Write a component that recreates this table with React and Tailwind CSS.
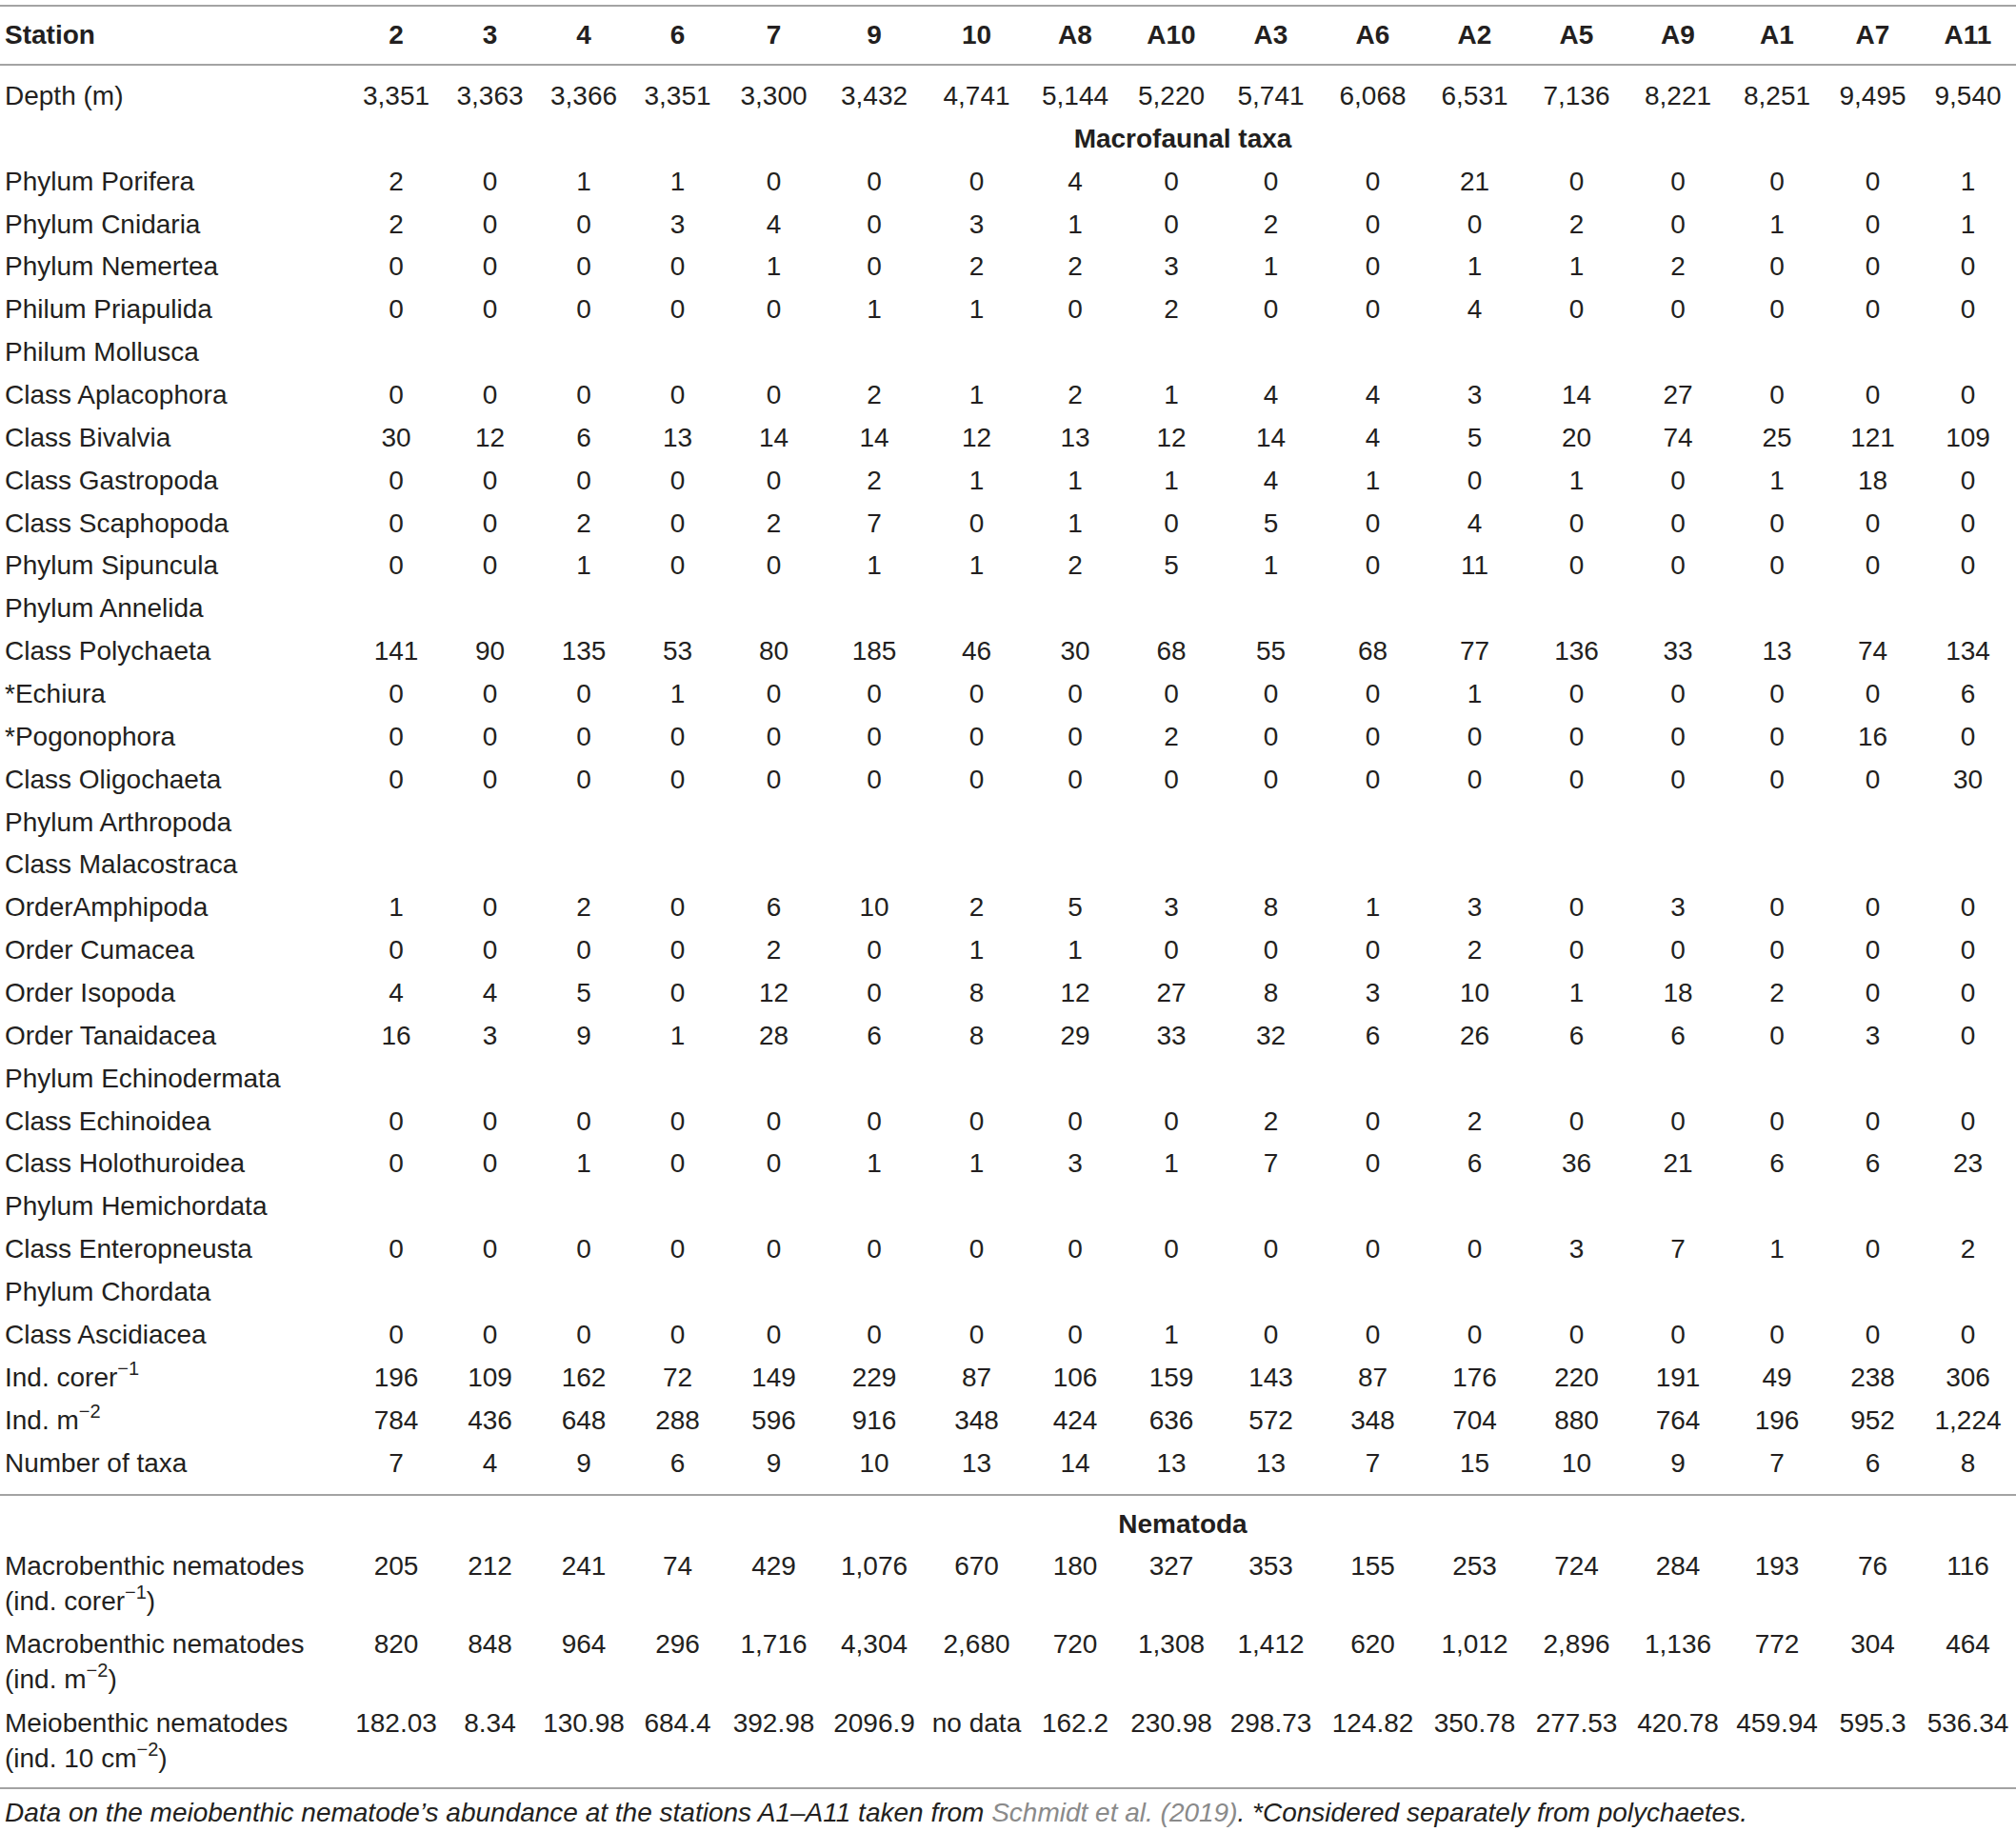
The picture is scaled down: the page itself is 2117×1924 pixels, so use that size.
import React from "react";

// Column widths measured from the reference (label column + 17 stations)
const colWidths = [
  "w-[367px]", "w-[98px]", "w-[99px]", "w-[98px]", "w-[99px]", "w-[103px]",
  "w-[108px]", "w-[107px]", "w-[100px]", "w-[102px]", "w-[107px]", "w-[107px]",
  "w-[107px]", "w-[107px]", "w-[106px]", "w-[102px]", "w-[99px]", "w-[101px]",
];

const stations = ["2", "3", "4", "6", "7", "9", "10", "A8", "A10", "A3", "A6", "A2", "A5", "A9", "A1", "A7", "A11"];

const depth = ["3,351", "3,363", "3,366", "3,351", "3,300", "3,432", "4,741", "5,144", "5,220", "5,741", "6,068", "6,531", "7,136", "8,221", "8,251", "9,495", "9,540"];

const row = (s) => s.split(" ");

const taxa = [
  { label: "Phylum Porifera", values: row("2 0 1 1 0 0 0 4 0 0 0 21 0 0 0 0 1") },
  { label: "Phylum Cnidaria", values: row("2 0 0 3 4 0 3 1 0 2 0 0 2 0 1 0 1") },
  { label: "Phylum Nemertea", values: row("0 0 0 0 1 0 2 2 3 1 0 1 1 2 0 0 0") },
  { label: "Philum Priapulida", values: row("0 0 0 0 0 1 1 0 2 0 0 4 0 0 0 0 0") },
  { label: "Philum Mollusca" },
  { label: "Class Aplacophora", values: row("0 0 0 0 0 2 1 2 1 4 4 3 14 27 0 0 0") },
  { label: "Class Bivalvia", values: row("30 12 6 13 14 14 12 13 12 14 4 5 20 74 25 121 109") },
  { label: "Class Gastropoda", values: row("0 0 0 0 0 2 1 1 1 4 1 0 1 0 1 18 0") },
  { label: "Class Scaphopoda", values: row("0 0 2 0 2 7 0 1 0 5 0 4 0 0 0 0 0") },
  { label: "Phylum Sipuncula", values: row("0 0 1 0 0 1 1 2 5 1 0 11 0 0 0 0 0") },
  { label: "Phylum Annelida" },
  { label: "Class Polychaeta", values: row("141 90 135 53 80 185 46 30 68 55 68 77 136 33 13 74 134") },
  { label: "*Echiura", values: row("0 0 0 1 0 0 0 0 0 0 0 1 0 0 0 0 6") },
  { label: "*Pogonophora", values: row("0 0 0 0 0 0 0 0 2 0 0 0 0 0 0 16 0") },
  { label: "Class Oligochaeta", values: row("0 0 0 0 0 0 0 0 0 0 0 0 0 0 0 0 30") },
  { label: "Phylum Arthropoda" },
  { label: "Class Malacostraca" },
  { label: "OrderAmphipoda", values: row("1 0 2 0 6 10 2 5 3 8 1 3 0 3 0 0 0") },
  { label: "Order Cumacea", values: row("0 0 0 0 2 0 1 1 0 0 0 2 0 0 0 0 0") },
  { label: "Order Isopoda", values: row("4 4 5 0 12 0 8 12 27 8 3 10 1 18 2 0 0") },
  { label: "Order Tanaidacea", values: row("16 3 9 1 28 6 8 29 33 32 6 26 6 6 0 3 0") },
  { label: "Phylum Echinodermata" },
  { label: "Class Echinoidea", values: row("0 0 0 0 0 0 0 0 0 2 0 2 0 0 0 0 0") },
  { label: "Class Holothuroidea", values: row("0 0 1 0 0 1 1 3 1 7 0 6 36 21 6 6 23") },
  { label: "Phylum Hemichordata" },
  { label: "Class Enteropneusta", values: row("0 0 0 0 0 0 0 0 0 0 0 0 3 7 1 0 2") },
  { label: "Phylum Chordata" },
  { label: "Class Ascidiacea", values: row("0 0 0 0 0 0 0 0 1 0 0 0 0 0 0 0 0") },
  { label: <>Ind. corer<sup className="text-[20px] -top-[12px]">−1</sup></>, values: row("196 109 162 72 149 229 87 106 159 143 87 176 220 191 49 238 306") },
  { label: <>Ind. m<sup className="text-[20px] -top-[12px]">−2</sup></>, values: row("784 436 648 288 596 916 348 424 636 572 348 704 880 764 196 952 1,224") },
];

const taxaCount = row("7 4 9 6 9 10 13 14 13 13 7 15 10 9 7 6 8");

const nematodes = [
  {
    label: ["Macrobenthic nematodes", <>(ind. corer<sup className="text-[20px] -top-[12px]">−1</sup>)</>],
    values: row("205 212 241 74 429 1,076 670 180 327 353 155 253 724 284 193 76 116"),
  },
  {
    label: ["Macrobenthic nematodes", <>(ind. m<sup className="text-[20px] -top-[12px]">−2</sup>)</>],
    values: row("820 848 964 296 1,716 4,304 2,680 720 1,308 1,412 620 1,012 2,896 1,136 772 304 464"),
  },
  {
    label: ["Meiobenthic nematodes", <>(ind. 10 cm<sup className="text-[20px] -top-[12px]">−2</sup>)</>],
    values: ["182.03", "8.34", "130.98", "684.4", "392.98", "2096.9", "no data", "162.2", "230.98", "298.73", "124.82", "350.78", "277.53", "420.78", "459.94", "595.3", "536.34"],
  },
];

function DataRow({ label, values, pad = "py-[4px]" }) {
  return (
    <tr>
      <td className={`pl-[5px] text-left whitespace-nowrap align-top ${pad}`}>{label}</td>
      {(values || stations.map(() => "")).map((v, i) => (
        <td key={i} className={`text-center whitespace-nowrap align-top ${pad}`}>{v}</td>
      ))}
    </tr>
  );
}

export default function App() {
  return (
    <div className="w-[2117px] bg-white pt-[5px] font-['Liberation_Sans',Arial,sans-serif] text-[28px] leading-[36.86px] text-[#231f20]">
      <table className="w-full table-fixed border-collapse">
        <colgroup>
          {colWidths.map((w, i) => (
            <col key={i} className={w} />
          ))}
        </colgroup>
        <thead>
          <tr className="border-t-2 border-b-2 border-[#a3a3a3] font-bold">
            <th className="h-[62px] pl-[5px] text-left">Station</th>
            {stations.map((s) => (
              <th key={s} className="h-[62px] text-center">{s}</th>
            ))}
          </tr>
        </thead>
        <tbody>
          <DataRow label="Depth (m)" values={depth} pad="pt-[14px] pb-[4px]" />
          <tr>
            <td />
            <td colSpan={17} className="py-[4px] text-center font-bold">Macrofaunal taxa</td>
          </tr>
          {taxa.map((t, i) => (
            <DataRow key={i} label={t.label} values={t.values} />
          ))}
          <DataRow label="Number of taxa" values={taxaCount} pad="pt-[4px] pb-[14px]" />
        </tbody>
        <tbody>
          <tr className="border-t-2 border-[#a3a3a3]">
            <td />
            <td colSpan={17} className="pt-[12px] pb-[3px] text-center font-bold">Nematoda</td>
          </tr>
          {nematodes.map((n, i) => (
            <DataRow
              key={i}
              label={<>{n.label[0]}<br />{n.label[1]}</>}
              values={n.values}
              pad={i === 2 ? "pt-[4px] pb-[12px]" : "pt-[4px] pb-[4.5px]"}
            />
          ))}
        </tbody>
      </table>
      <div className="border-t-2 border-[#a3a3a3] pl-[5px] pt-[7px] pb-[6px] italic">
        Data on the meiobenthic nematode’s abundance at the stations A1–A11 taken from{" "}
        <span className="text-[#8a8a8a]">Schmidt et al. (2019)</span>. *Considered separately from polychaetes.
      </div>
    </div>
  );
}
